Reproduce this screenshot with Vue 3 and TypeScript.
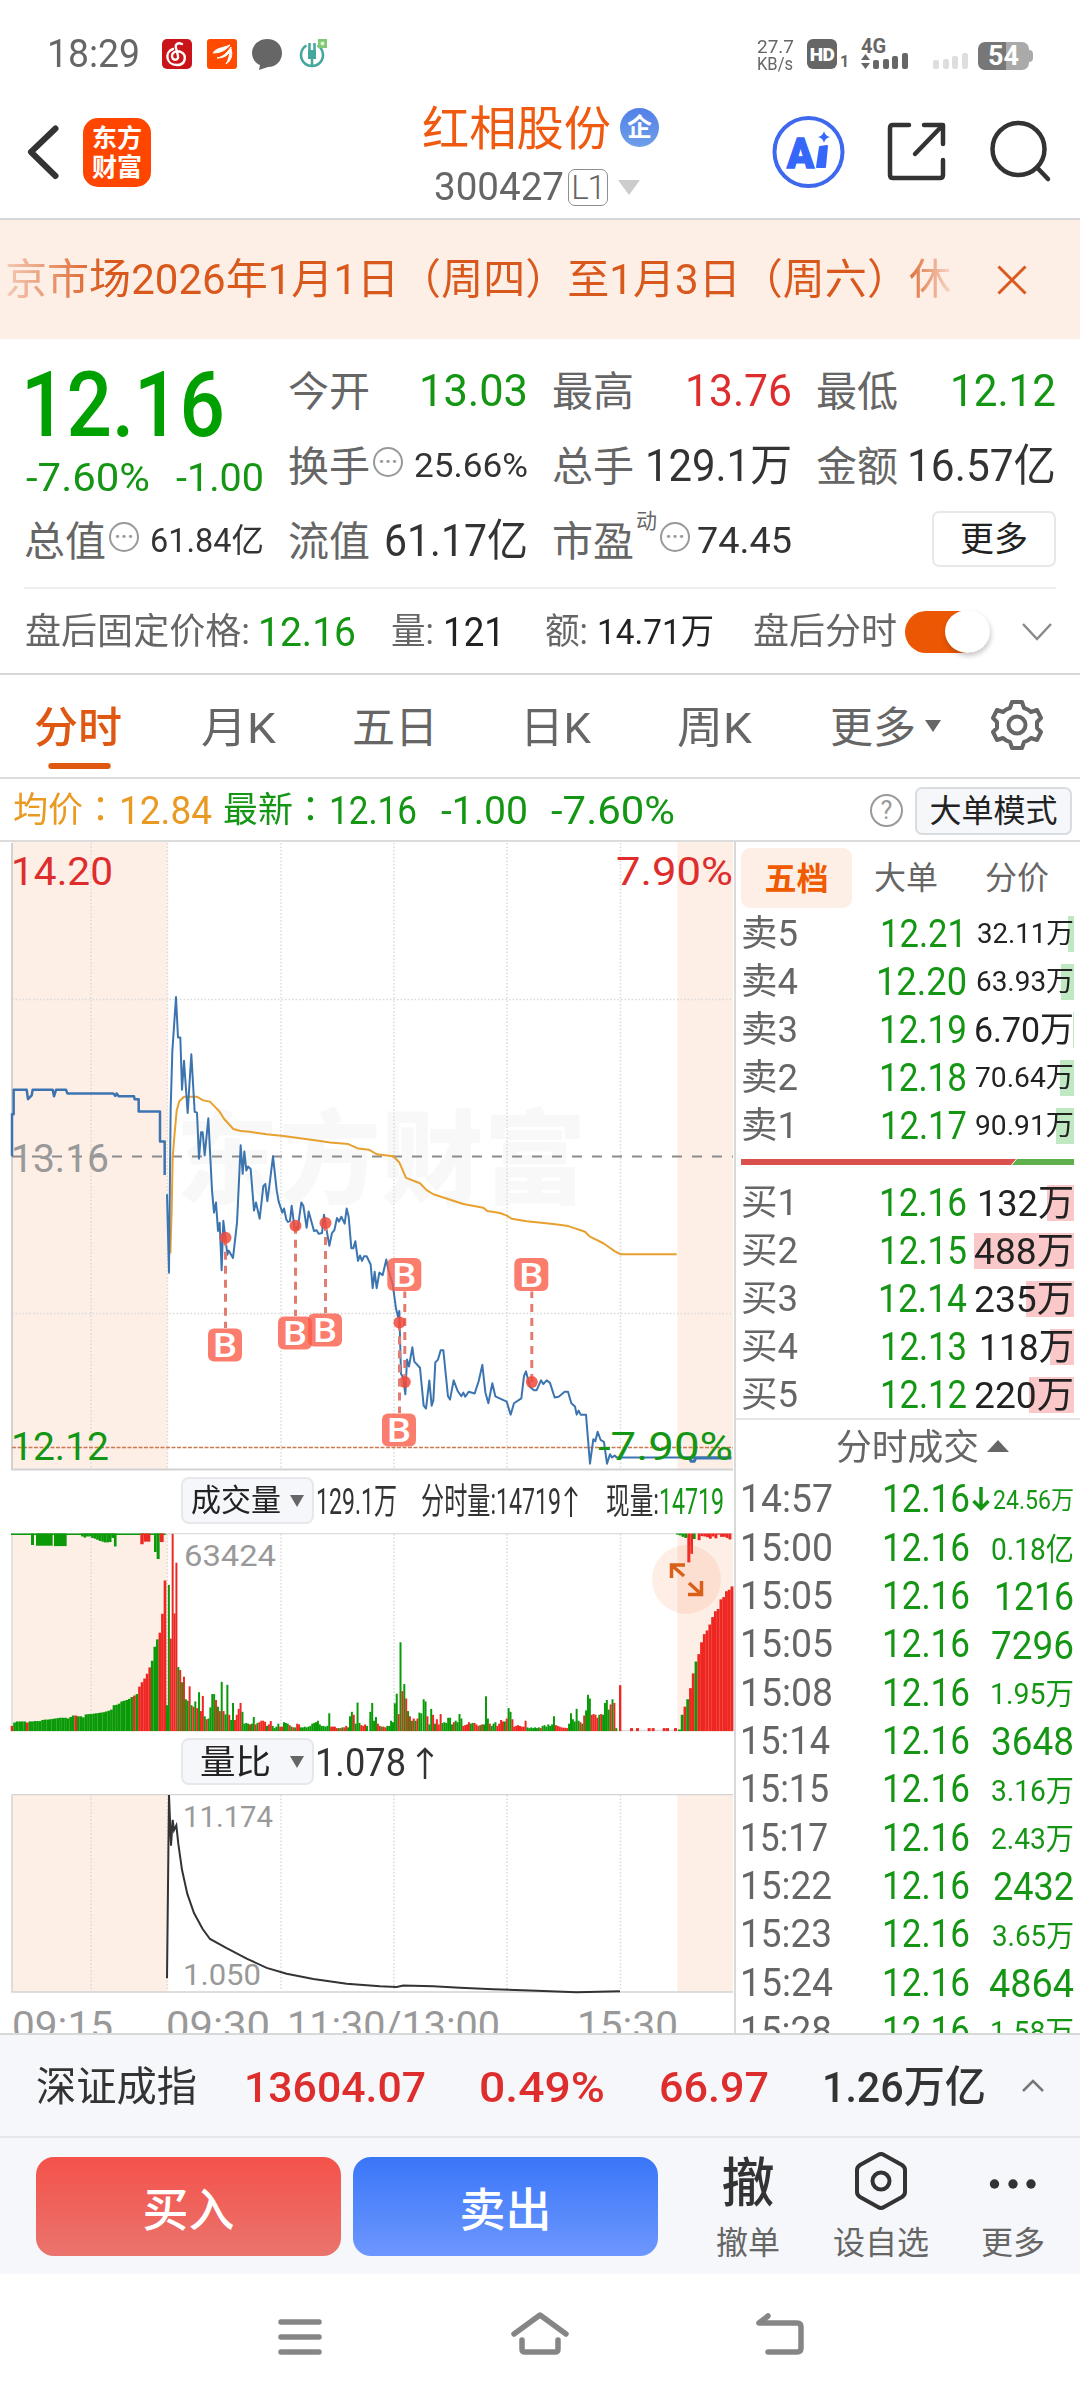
<script setup lang="ts">
import type { Directive } from 'vue'

// Squeezes or stretches a line of text to the given width in px.
const vFit: Directive<HTMLElement, number> = {
  mounted(el, { value }) {
    const natural = el.getBoundingClientRect().width
    if (!natural) return
    el.style.transformOrigin = '0 50%'
    el.style.transform = `scaleX(${value / natural})`
    el.style.marginRight = `${value - natural}px`
  },
}

interface Level { name: string; price: string; vol: string; bar: number; size: number; pw: number; vw: number }
const asks: Level[] = [
  { name: '卖5', price: '12.21', vol: '32.11万', bar: 6, size: 28, pw: 87, vw: 97 },
  { name: '卖4', price: '12.20', vol: '63.93万', bar: 13, size: 28, pw: 91, vw: 98 },
  { name: '卖3', price: '12.19', vol: '6.70万', bar: 1, size: 35, pw: 88, vw: 100 },
  { name: '卖2', price: '12.18', vol: '70.64万', bar: 14, size: 28, pw: 88, vw: 99 },
  { name: '卖1', price: '12.17', vol: '90.91万', bar: 18, size: 28, pw: 87, vw: 99 },
]
const bids: Level[] = [
  { name: '买1', price: '12.16', vol: '132万', bar: 27, size: 37, pw: 88, vw: 97 },
  { name: '买2', price: '12.15', vol: '488万', bar: 100, size: 37, pw: 88, vw: 100 },
  { name: '买3', price: '12.14', vol: '235万', bar: 48, size: 37, pw: 89, vw: 100 },
  { name: '买4', price: '12.13', vol: '118万', bar: 24, size: 37, pw: 87, vw: 95 },
  { name: '买5', price: '12.12', vol: '220万', bar: 45, size: 37, pw: 87, vw: 100 },
]

interface Trade { time: string; vol: string; size: number; vw: number; down?: boolean; tw: number }
const trades: Trade[] = [
  { time: '14:57', vol: '24.56万', size: 25, vw: 81, down: true, tw: 93 },
  { time: '15:00', vol: '0.18亿', size: 31, vw: 83, tw: 93 },
  { time: '15:05', vol: '1216', size: 38, vw: 80, tw: 93 },
  { time: '15:05', vol: '7296', size: 38, vw: 83, tw: 93 },
  { time: '15:08', vol: '1.95万', size: 30, vw: 84, tw: 93 },
  { time: '15:14', vol: '3648', size: 38, vw: 83, tw: 90 },
  { time: '15:15', vol: '3.16万', size: 30, vw: 83, tw: 89 },
  { time: '15:17', vol: '2.43万', size: 30, vw: 83, tw: 88 },
  { time: '15:22', vol: '2432', size: 38, vw: 81, tw: 92 },
  { time: '15:23', vol: '3.65万', size: 30, vw: 82, tw: 92 },
  { time: '15:24', vol: '4864', size: 38, vw: 85, tw: 93 },
  { time: '15:28', vol: '1.58万', size: 30, vw: 84, tw: 92 },
]

const preLine = '36,797 36,694 41,694 41,634 80,634 84,657 95,648 98,634 158,634 162,650 168,634 198,634 202,643 340,643 346,649 350,643 356,650 402,650 404,657 416,657 416,687 480,687 480,761 494,761 494,843'
const priceLine = '501,890 507,1082 512,680 517,540 528,407 534,506 541,506 546,634 552,563 563,691 574,547 584,688 591,690 597,803 603,738 608,738 614,795 625,704 636,880 642,935 648,910 654,980 659,960 665,1076 670,955 682,1038 686,1028 699,1046 711,960 722,770 728,840 733,785 739,832 744,822 752,828 762,930 768,910 779,950 790,870 796,865 802,907 808,870 819,797 830,880 836,908 847,935 852,925 859,952 864,958 870,955 875,918 884,975 893,975 904,910 910,918 920,972 926,932 942,980 950,978 956,987 966,985 972,940 988,1016 996,985 1003,978 1011,948 1017,957 1024,945 1034,962 1040,925 1046,945 1054,1022 1060,1022 1066,1005 1074,1053 1080,1040 1086,1053 1092,1042 1100,1042 1112,1062 1118,1120 1124,1080 1130,1120 1138,1082 1148,1088 1159,1050 1165,1075 1178,1110 1188,1170 1194,1190 1198,1176 1203,1330 1210,1340 1216,1380 1221,1295 1227,1312 1237,1265 1243,1300 1260,1315 1271,1408 1278,1415 1288,1346 1295,1408 1300,1395 1306,1302 1314,1295 1322,1272 1330,1272 1344,1385 1350,1393 1361,1346 1373,1372 1384,1385 1390,1376 1396,1386 1406,1374 1424,1378 1436,1348 1447,1308 1456,1375 1465,1402 1477,1353 1486,1385 1520,1398 1532,1430 1542,1402 1564,1390 1572,1335 1578,1324 1590,1362 1602,1370 1610,1370 1623,1346 1630,1355 1640,1346 1650,1352 1664,1388 1676,1386 1694,1374 1704,1374 1714,1402 1725,1410 1730,1430 1736,1420 1742,1430 1758,1430 1770,1550 1780,1490 1786,1495 1793,1472 1802,1492 1812,1497 1821,1550 1830,1527 1836,1535 1844,1530 1850,1535 2194,1535'
const avgLine = '511,1035 515,930 518,800 524,740 530,685 538,662 552,651 590,651 610,660 630,663 658,687 672,705 700,730 722,735 750,737 800,743 850,747 950,758 990,763 1045,767 1075,778 1108,781 1130,792 1180,797 1198,812 1218,850 1260,863 1280,880 1300,890 1390,914 1450,923 1462,931 1500,936 1522,943 1535,950 1580,956 1660,963 1705,968 1755,982 1770,994 1810,1010 1845,1030 1862,1037 2030,1037'
const ratioLine = '501,1398 507,903 513,1040 518,970 522,998 529,985 535,1035 546,1105 562,1170 582,1222 608,1265 630,1292 680,1317 740,1345 800,1370 860,1386 940,1400 1040,1413 1140,1420 1190,1422 1210,1418 1300,1420 1380,1424 1480,1428 1610,1432 1730,1436 1860,1433'

const marks = [
  { x: 225, dot: 1236.7, box: 1344 },
  { x: 295, dot: 1224.7, box: 1332 },
  { x: 325, dot: 1222, box: 1329 },
  { x: 404.3, dot: 1381, box: 1273.5 },
  { x: 399, dot: 1321.5, box: 1429 },
  { x: 531.3, dot: 1381, box: 1273.5 },
]

interface Bar { x: number; h: number; w: number; up: boolean }
function bars(start: number, step: number, src: string): Bar[] {
  return src.split(' ').map((t, i) => ({ x: start + i * step, h: parseInt(t), w: step + 0.3, up: t.endsWith('r') }))
}
const volume: Bar[] = [
  ...bars(32, 7.65, '14r 23 26 26 26 26 23r 26 26 27 27 27 30 31 31 32 33 34 35 36 36 36 34 38 42 42r 40 40 37 45 46 46 47 48 49 50 51 53 55 58 70 71 74 80 82 84 87 92 96r 100 120r 132r 142r 155r 172r 190 228 248 266r 317r 407r'),
  ...bars(498, 5.66, '70 395 250r 533r 318r 455r 173 165r 132 147r 86 82 121r 70 66r 80 62r 105 54r 95r 40 32r 34 64 100 100 84r 66 54r 133 54r 45 125 44r 30 76 30r 44r 60r 76r 52 20 22 20 18r 20 38 18r 22 24r 28r 28r 25r'),
  ...bars(798, 5.66, '14 18r 27r 14 8 12 20 12r 12r 24 22 20 16r 12 10r 10 20r 18r 10 10 12 10 12 14 20 22 24 28 18 14 14 12 14 48 12r 12r 12r 8r 8 8r 10 10r 14r 10 40 52 44r 20 77 22 16r 14r 18r 14'),
  ...bars(1108, 5.66, '52 76 28 38 20r 14r 12 12r 10r 14 14 28 24 75 101 46r 240 108r 127 88r 54 40r 28 34r 28 34r 50 48'),
  ...bars(1268, 5.66, '86 80 40r 18 60 44r 20 32r 18r 46r 22 24 22 36 36 18 24r 28 24 46 34 14r 16r 18r 24r 20 22 22r 18r 14r 16 18r 18'),
  ...bars(1455, 5.66, '94 34 20r 14 20 24 14r 20r 30r 26r 26 34r 62 52 32r 12r 14r 16r 14r 12r 12r 28r 10 8 10 8 10 8 10 8r'),
  ...bars(1625, 5.66, '14 16 12 18 14 18 40 16r 14r 12r 10r 9r 9r 8r 20'),
  ...bars(1710, 5.66, '48 32 26 60 28 24r 20 42r 56 98 88 44r 46r 44r 36r 44 46r 44 76 84 58 72r 86 76r 8'),
  { x: 1857, h: 124, w: 7, up: true },
  ...bars(2034, 8.3, '4 44 66r 86 116r 156r 188 208r 240r 262r 272r 288r 308r 324r 330r 356r 362r 378r 382r 391r'),
  ...[1890, 1908, 1943, 1955, 1988, 1998, 2022].map(x => ({ x, h: 8, w: 9, up: true })),
]
const hanging: Bar[] = [
  { x: 33, h: 4, w: 464, up: false },
  { x: 93, h: 31, w: 9, up: false },
  { x: 108, h: 33, w: 50, up: false },
  { x: 162, h: 34, w: 38, up: false },
  ...bars(243, 7.6, '8 11 8 8 12 14 17 20 22 24 24 23 12 35'),
  { x: 421, h: 29, w: 10, up: true },
  { x: 431, h: 22, w: 20, up: true },
  { x: 462, h: 50, w: 8, up: false },
  { x: 470, h: 69, w: 9, up: false },
  { x: 479, h: 23, w: 12, up: true },
  ...bars(2028, 8.3, '3 5 9 12'),
  { x: 2062, h: 78, w: 9, up: true },
  { x: 2071, h: 55, w: 8, up: true },
  { x: 2079, h: 15, w: 8, up: false },
  ...bars(2093, 8.4, '18r 7r 8r 10r 14r 8r 13r 3r 9r 9r 12r 16r'),
]
const fill = (b: Bar) => (b.up ? '#ee2722' : '#0a9a08')
const grid = [91, 167.5, 281, 394, 507, 620.5]
</script>

<template>
  <div class="screen">
    <header class="status">
      <span v-fit="93" class="clock">18:29</span>
      <svg class="s-icons" width="170" height="32" viewBox="160 38 170 32">
        <rect x="162" y="39" width="30" height="30" rx="5" fill="#c9151a" />
        <path d="M182 44c-5-2-7 1-6 4l2 8c1 5-6 5-6 0 0-4 5-6 9-4 6 3 5 13-4 13-11 0-13-13-4-16" fill="none" stroke="#fff" stroke-width="2.4" stroke-linecap="round" />
        <rect x="207" y="39" width="30" height="30" rx="3" fill="#ff4a00" />
        <path d="M213 53c3-5 10-5 17-8-3 4-8 8-17 8zM217 58c6-1 10-5 14-11 0 6-5 11-14 11zM226 64c3-4 3-9 5-15 2 6 0 12-5 15z" fill="#fff" stroke="#fff" stroke-width="1" />
        <path d="M267 39c9 0 15 6 15 14s-6 14-14 14l-9 3 1-5c-5-2-8-7-8-12 0-8 7-14 15-14z" fill="#666" />
        <path d="M306.500 45.500a11 11 0 1 0 11 0" fill="none" stroke="#45a79c" stroke-width="2.500" />
        <path d="M309.500 43v10M314.500 43v10M312 52v15" fill="none" stroke="#45a79c" stroke-width="2.500" /><rect x="308" y="50" width="8" height="9" fill="#45a79c" />
        <rect x="318" y="39" width="9" height="9" fill="#7fc978" /><circle cx="322.500" cy="43.500" r="2" fill="#dff3cf" />
      </svg>
      <div class="speed"><span v-fit="37">27.7</span><span v-fit="36">KB/s</span></div>
      <span class="hd">HD</span><span class="hd-sub">1</span>
      <div class="sim">
        <b>4G</b>
        <svg width="48" height="17" viewBox="861 53 48 17" fill="#666"><path d="M861 60l4.500-6 4.500 6zM861 63h9l-4.500 6z" /><rect x="873" y="60" width="6" height="9" rx="2" /><rect x="883" y="59" width="6" height="10" rx="2" /><rect x="892" y="56" width="6" height="13" rx="2" /><rect x="902" y="53" width="6" height="16" rx="2" /></svg>
      </div>
      <svg class="nosim" width="36" height="17" viewBox="933 53 36 17" fill="#dedede"><rect x="933" y="60" width="6" height="9" rx="2" /><rect x="943" y="59" width="6" height="10" rx="2" /><rect x="952" y="56" width="6" height="13" rx="2" /><rect x="962" y="53" width="6" height="16" rx="2" /></svg>
      <div class="battery"><span>54</span></div><i class="nub"></i>
    </header>

    <div class="head">
      <svg class="back" width="40" height="60" viewBox="22 122 40 60"><path d="M55.500 128.500L31 152l24.500 24" fill="none" stroke="#333" stroke-width="6" stroke-linecap="round" stroke-linejoin="round" /></svg>
      <div class="logo"><span>东方</span><span>财富</span></div>
      <div class="title">
        <div class="name"><span v-fit="189">红相股份</span><i class="corp">企</i></div>
        <div class="code"><span v-fit="130">300427</span><i class="l1">L1</i><i class="caret"></i></div>
      </div>
      <svg class="tools" width="290" height="76" viewBox="770 114 290 76" fill="none">
        <circle cx="808.500" cy="152" r="34" stroke="#3e68ee" stroke-width="4" />
        <text x="787" y="168" class="ai" textLength="27" lengthAdjust="spacingAndGlyphs">A</text>
        <path d="M820 147l7-1-2 21h-8z" fill="#3567fa" stroke="#3567fa" stroke-width="2" stroke-linejoin="round" />
        <path d="M824 131q1 5 6 6-5 1-6 6-1-5-6-6 5-1 6-6z" fill="#3567fa" />
        <g stroke="#333" stroke-width="4.500" stroke-linecap="round" stroke-linejoin="round"><path d="M909 125h-16q-3 0-3 3v47q0 3 3 3h47q3 0 3-3v-15M924 125h19v19M942 126l-27 28" /><circle cx="1018.500" cy="149" r="26" /><path d="M1037 167.500l11 11.500" /></g>
      </svg>
    </div>

    <div class="notice">
      <div class="marquee"><span v-fit="946">京市场2026年1月1日（周四）至1月3日（周六）休</span></div>
      <svg width="32" height="32" viewBox="0 0 32 32"><path d="M2.500 2.500l27 27M29.500 2.500l-27 27" stroke="#d9591c" stroke-width="3" /></svg>
    </div>

    <section class="quote">
      <div class="now">
        <span v-fit="204" class="big">12.16</span>
        <div class="chg"><span v-fit="124">-7.60%</span><span v-fit="88">-1.00</span></div>
      </div>
      <div class="cell"><label>今开</label><span v-fit="109" class="v g">13.03</span></div>
      <div class="cell"><label>最高</label><span v-fit="107" class="v r">13.76</span></div>
      <div class="cell"><label>最低</label><span v-fit="106" class="v g">12.12</span></div>
      <div class="cell"><label>换手</label><i class="info">•••</i><span v-fit="114" class="v s">25.66%</span></div>
      <div class="cell"><label>总手</label><span v-fit="147" class="v">129.1万</span></div>
      <div class="cell"><label>金额</label><span v-fit="149" class="v">16.57亿</span></div>
      <div class="cell"><label>总值</label><i class="info">•••</i><span v-fit="114" class="v s">61.84亿</span></div>
      <div class="cell"><label>流值</label><span v-fit="144" class="v">61.17亿</span></div>
      <div class="cell"><label>市盈</label><sup>动</sup><i class="info pe">•••</i><span v-fit="95" class="v m">74.45</span></div>
      <div class="cell end"><button class="more">更多</button></div>
    </section>
    <section class="after">
      <span v-fit="225" class="lb">盘后固定价格:</span><span v-fit="98" class="num g a1">12.16</span>
      <span v-fit="43" class="lb a2">量:</span><span v-fit="62" class="num a3">121</span>
      <span v-fit="43" class="lb a4">额:</span><span v-fit="117" class="num sm a5">14.71万</span>
      <span v-fit="144" class="lb a6">盘后分时</span>
      <i class="toggle"></i>
      <svg width="32" height="20" viewBox="0 0 32 20"><path d="M2 2l14 15L30 2" fill="none" stroke="#8a8a8a" stroke-width="2.500" /></svg>
    </section>

    <nav class="tabs">
      <span v-fit="88" class="on">分时</span><span v-fit="75">月K</span><span v-fit="86">五日</span><span v-fit="71">日K</span><span v-fit="75">周K</span><span v-fit="86">更多</span>
      <i class="tri"></i>
      <svg class="gear" width="54" height="54" viewBox="-27 -27 54 54" fill="none" stroke="#666" stroke-width="4" stroke-linejoin="round">
        <path d="M-5-23H5L7-17Q11-16 14-13L20-15 24-7 20-3V3L24 7 20 15 14 13Q11 16 7 17L5 23H-5L-7 17Q-11 16-14 13L-20 15-24 7-20 3V-3L-24-7-20-15-14-13Q-11-16-7-17Z" /><circle r="8.500" />
      </svg>
    </nav>

    <div class="avg">
      <span v-fit="105" class="zh o">均价：</span><span v-fit="93" class="n o">12.84</span>
      <span v-fit="105" class="zh g b1">最新：</span><span v-fit="88" class="n g">12.16</span><span v-fit="87" class="n g b2">-1.00</span><span v-fit="124" class="n g b3">-7.60%</span>
      <i class="help">?</i><button class="mode">大单模式</button>
    </div>

    <main class="board">
      <div class="charts">
        <svg class="plot" width="735" height="629" viewBox="0 841 735 629">
          <rect x="12" y="841" width="155.500" height="627" fill="#fdeee6" /><rect x="677.500" y="841" width="55.500" height="627" fill="#fdeee6" />
          <text x="176" y="1195" class="mark" textLength="410">东方财富</text>
          <g class="dots"><line v-for="x in grid" :key="x" :x1="x" :x2="x" y1="842" y2="1468" /><path d="M12 998.500H733M12 1312.500H733" /></g>
          <path d="M12 842V1468.500H733" fill="none" stroke="#d2d2d2" stroke-width="2" />
          <path d="M12 1155.500H733" stroke="#8b8b8b" stroke-width="2" stroke-dasharray="10 10" />
          <path d="M12 1446.500H733" stroke="#cc7a52" stroke-width="1.500" stroke-dasharray="4 1.500" />
          <text x="11" y="1171" textLength="98" lengthAdjust="spacingAndGlyphs" fill="#999">13.16</text>
          <g transform="translate(0 830) scale(.33333 .40816)" fill="none" stroke-linejoin="round">
            <polyline :points="avgLine" stroke="#e8a02f" stroke-width="2" vector-effect="non-scaling-stroke" />
            <polyline :points="preLine" stroke="#3c74b0" stroke-width="2.500" vector-effect="non-scaling-stroke" />
            <polyline :points="priceLine" stroke="#3c74b0" stroke-width="2" vector-effect="non-scaling-stroke" />
            <path d="M2055 1536h14l4 8h10l4-8h107" stroke="#3c74b0" stroke-width="3" vector-effect="non-scaling-stroke" />
          </g>
          <text x="11" y="884" textLength="102" lengthAdjust="spacingAndGlyphs" fill="#dd2d2d">14.20</text>
          <text x="616" y="884" textLength="117" lengthAdjust="spacingAndGlyphs" fill="#dd2d2d">7.90%</text>
          <text x="11" y="1459" textLength="98" lengthAdjust="spacingAndGlyphs" fill="#149614">12.12</text>
          <text x="598" y="1459" textLength="135" lengthAdjust="spacingAndGlyphs" fill="#149614">-7.90%</text>
          <g v-for="m in marks" :key="m.x">
            <line :x1="m.x + 0.500" :x2="m.x + 0.500" :y1="m.dot" :y2="m.box + (m.box > m.dot ? -17 : 17)" stroke="#e27c70" stroke-width="3" stroke-dasharray="8 6" />
            <ellipse :cx="m.x + 0.500" :cy="m.dot" rx="6" ry="6" fill="#f04a3c" fill-opacity=".85" />
            <rect :x="m.x - 17" :y="m.box - 16.500" width="34" height="33" rx="6" fill="#fa5c48" fill-opacity=".8" />
            <text :x="m.x - 12" :y="m.box + 12" class="b" textLength="24" lengthAdjust="spacingAndGlyphs">B</text>
          </g>
        </svg>

        <div class="ind">
          <button><span v-fit="90" class="i1">成交量</span><i class="tri sm"></i></button>
          <span v-fit="81" class="c1">129.1万</span><span v-fit="140" class="c2">分时量:14719</span><svg width="14" height="32" viewBox="0 0 14 32"><path d="M7 31V2M1 10L7 2l6 8" fill="none" stroke="#333" stroke-width="2" /></svg>
          <span v-fit="53" class="c3">现量:</span><span v-fit="65" class="g">14719</span>
        </div>
        <svg class="plot" width="735" height="199" viewBox="0 1532 735 199">
          <rect x="12" y="1532" width="155.500" height="198" fill="#fdeee6" /><rect x="677.500" y="1532" width="55.500" height="198" fill="#fdeee6" />
          <g class="dots"><line v-for="x in grid" :key="x" :x1="x" :x2="x" y1="1533" y2="1729" /></g>
          <path d="M733 1532.500H12V1729.500H733" fill="none" stroke="#dcdcdc" stroke-width="1.500" />
          <g transform="translate(0 1460) scale(.33333 .36996)">
            <rect v-for="(b, i) in volume" :key="i" :x="b.x" :y="730 - b.h" :width="b.w" :height="b.h" :fill="fill(b)" />
            <rect v-for="(b, i) in hanging" :key="'t' + i" :x="b.x" y="196" :width="b.w" :height="b.h" :fill="fill(b)" />
          </g>
          <text x="184" y="1565" textLength="92" lengthAdjust="spacingAndGlyphs" class="sub">63424</text>
          <circle cx="686.500" cy="1578.500" r="34.500" fill="#f57a3c" fill-opacity=".13" />
          <path d="M671.500 1577v-13H685M672 1564.500l12 10.500M701.500 1580v13.500H688M701 1593l-12-11" fill="none" stroke="#d96018" stroke-width="3.500" />
        </svg>

        <div class="ind">
          <button><span v-fit="71" class="i2">量比</span><i class="tri sm"></i></button>
          <span v-fit="91" class="c4">1.078</span><svg class="up" width="18" height="32" viewBox="0 0 18 32"><path d="M9 32V2M1.500 9.500L9 2l7.500 7.500" fill="none" stroke="#333" stroke-width="2.500" /></svg>
        </div>
        <svg class="plot" width="735" height="239" viewBox="0 1793 735 239">
          <rect x="12" y="1793" width="155.500" height="198" fill="#fdeee6" /><rect x="677.500" y="1793" width="55.500" height="198" fill="#fdeee6" />
          <g class="dots"><line v-for="x in grid" :key="x" :x1="x" :x2="x" y1="1794" y2="1990" /></g>
          <path d="M12 1793.500H733M12 1793.500V1991H733" fill="none" stroke="#d4d4d4" stroke-width="1.500" />
          <text x="183" y="1826" textLength="90" lengthAdjust="spacingAndGlyphs" class="sub">11.174</text>
          <text x="183" y="1984" textLength="78" lengthAdjust="spacingAndGlyphs" class="sub">1.050</text>
          <polyline :points="ratioLine" transform="translate(0 1460) scale(.33333 .36996)" fill="none" stroke="#333" stroke-width="2" vector-effect="non-scaling-stroke" />
          <g fill="#999"><text x="12" y="2038" textLength="101" lengthAdjust="spacingAndGlyphs">09:15</text><text x="166" y="2038" textLength="104" lengthAdjust="spacingAndGlyphs">09:30</text><text x="287" y="2038" textLength="213" lengthAdjust="spacingAndGlyphs">11:30/13:00</text><text x="577" y="2038" textLength="101" lengthAdjust="spacingAndGlyphs">15:30</text></g>
        </svg>
      </div>

      <aside class="side">
        <div class="stabs"><b>五档</b><span>大单</span><span>分价</span></div>
        <div v-for="l in asks" :key="l.name" class="lvl">
          <i class="bar ask" :style="{ width: l.bar + 'px' }"></i>
          <span v-fit="57" class="ln">{{ l.name }}</span><span v-fit="l.pw" class="lp">{{ l.price }}</span><div class="lv"><span v-fit="l.vw" :style="{ fontSize: l.size + 'px' }">{{ l.vol }}</span></div>
        </div>
        <svg class="ratio" width="333" height="6" viewBox="0 0 333 6"><path d="M0 0h275l-5 6H0z" fill="#d9504c" /><path d="M276 0h57v6h-62z" fill="#5fb04c" /></svg>
        <div v-for="l in bids" :key="l.name" class="lvl">
          <i class="bar bid" :style="{ width: l.bar + 'px' }"></i>
          <span v-fit="57" class="ln">{{ l.name }}</span><span v-fit="l.pw" class="lp">{{ l.price }}</span><div class="lv"><span v-fit="l.vw" :style="{ fontSize: l.size + 'px' }">{{ l.vol }}</span></div>
        </div>
        <div class="thead"><span v-fit="143">分时成交</span><i class="tri-up"></i></div>
        <div v-for="(t, i) in trades" :key="i" class="trade">
          <div class="tc"><span v-fit="t.tw" class="tt">{{ t.time }}</span></div><span v-fit="88" class="tp">12.16</span>
          <svg v-if="t.down" width="18" height="24" viewBox="0 0 18 24"><path d="M9 0v22M1.500 14L9 21.500l7.500-7.500" fill="none" stroke="#149614" stroke-width="3.500" /></svg>
          <div class="tv"><span v-fit="t.vw" :style="{ fontSize: t.size + 'px' }">{{ t.vol }}</span></div>
        </div>
      </aside>
    </main>

    <div class="index">
      <span v-fit="161" class="ix0">深证成指</span><span v-fit="182" class="r ix1">13604.07</span><span v-fit="126" class="r ix2">0.49%</span><span v-fit="110" class="r ix3">66.97</span><span v-fit="164" class="ix4">1.26万亿</span>
      <svg width="24" height="14" viewBox="0 0 24 14"><path d="M2 12L12 2l10 10" fill="none" stroke="#777" stroke-width="2.500" /></svg>
    </div>
    <div class="actions">
      <button class="buy">买入</button><button class="sell">卖出</button>
      <div class="act a-cancel"><span class="glyph">撤</span><span>撤单</span></div>
      <div class="act a-fav"><svg width="56" height="62" viewBox="-28 -31 56 62" fill="none" stroke="#333" stroke-width="4" stroke-linejoin="round"><path d="M-3-26Q0-28 3-26L21-16Q24-14 24-11V11Q24 14 21 16L3 26Q0 28-3 26L-21 16Q-24 14-24 11V-11Q-24-14-21-16Z" /><circle r="8.500" /></svg><span>设自选</span></div>
      <div class="act a-more"><svg width="48" height="62" viewBox="0 0 48 62" fill="#333"><circle cx="5.500" cy="34" r="4.700" /><circle cx="24" cy="34" r="4.700" /><circle cx="42" cy="34" r="4.700" /></svg><span>更多</span></div>
    </div>
    <footer class="navbar">
      <svg width="560" height="60" viewBox="260 2306 560 60" fill="none" stroke="#868686" stroke-width="5.500" stroke-linecap="round" stroke-linejoin="round"><path d="M281 2322h38M281 2337h38M281 2352h38M514 2334l26-19 26 19M522 2340v9q0 3 3 3h30q3 0 3-3v-9M768 2316l-9 7h38q4 0 4 4v21q0 4-4 4h-29" /></svg>
    </footer>
  </div>
</template>

<style>
body { background: #fff; }
</style>
<style scoped>
.screen { width: 1080px; height: 2400px; overflow: hidden; display: flex; flex-direction: column; background: #fff; font-family: Roboto, "Noto Sans CJK SC", sans-serif; color: #333; line-height: 1; }
.screen * { box-sizing: border-box; }
i { font-style: normal; }
span { display: inline-block; white-space: nowrap; flex: none; }
button { font: inherit; line-height: 1; padding: 0; border: 0; background: none; color: #222; flex: none; }
svg { flex: none; display: block; }
.g { color: #149614 !important; }
.r { color: #dd2d2d !important; }
.o { color: #e99a22; }

.status { height: 92px; flex: none; display: flex; padding: 38px 0 0 47px; color: #666; }
.clock { font-size: 39px; margin-top: -3px; }
.s-icons { margin-left: 20px; }
.speed { margin-left: 427px; font-size: 18px; display: flex; flex-direction: column; align-items: flex-start; width: 37px; }
.speed span { height: 17px; line-height: 17px; }
.hd { display: block; flex: none; margin: 1px 0 0 13px; width: 30px; height: 30px; border-radius: 6px; background: #666; color: #fff; font-size: 19px; font-weight: 900; line-height: 31px; text-align: center; letter-spacing: -.5px; }
.hd-sub { display: block; flex: none; font-size: 16px; font-weight: 700; line-height: 16px; width: 9px; margin: 16px 0 0 3px; }
.sim { margin-left: 12px; width: 48px; height: 32px; }
.sim b { display: block; font-size: 20px; height: 15px; line-height: 17px; }
.nosim { margin: 15px 0 0 24px; }
.battery { margin: 4px 0 0 9px; width: 51px; height: 28px; border-radius: 7px; background: linear-gradient(90deg, #777 0 28px, #aaa 28px); color: #fff; font-weight: 700; font-size: 27px; line-height: 29px; text-align: center; }
.nub { width: 4px; height: 12px; margin-top: 12px; background: #aaa; border-radius: 0 4px 4px 0; }

.head { height: 128px; flex: none; display: flex; border-bottom: 2px solid #d4d6d9; }
.back { margin: 30px 0 0 22px; }
.logo { margin: 26px 0 0 21px; width: 68px; height: 69px; border-radius: 15px; background: #ff4600; color: #fff; font-weight: 700; font-size: 25px; display: flex; flex-direction: column; align-items: center; padding-top: 8px; gap: 3px; }
.logo span { height: 26px; line-height: 26px; }
.title { width: 280px; margin: 12px 0 0 271px; height: 108px; }
.name { display: flex; align-items: center; height: 48px; font-size: 47px; color: #f05a10; }
.corp { width: 39px; height: 39px; border-radius: 50%; background: linear-gradient(#5280e6, #6f9eeb); color: #fff; font-size: 25px; font-weight: 700; text-align: center; line-height: 40px; margin-left: 9px; margin-top: -1px; }
.code { display: flex; align-items: center; height: 38px; margin: 16px 0 0 12px; font-size: 39px; color: #666; }
.l1 { width: 40px; height: 37px; margin-left: 4px; border: 1.500px solid #8e8e8e; border-radius: 7px; font-size: 33px; line-height: 35px; text-align: center; letter-spacing: -1px; font-weight: 300; }
.caret { margin-left: 10px; border: 11px solid transparent; border-top: 15px solid #ccc; border-bottom: 0; }
.tools { margin: 22px 0 0 68px; }
.ai { font: 900 43px Roboto, sans-serif; fill: #3567fa; stroke: #3567fa; stroke-width: 1.500px; }

.notice { height: 119px; flex: none; background: #fdeee6; display: flex; align-items: center; color: #d9591c; font-size: 42px; }
.marquee { width: 996px; padding-left: 5px; overflow: hidden; height: 60px; line-height: 60px; white-space: nowrap; -webkit-mask-image: linear-gradient(90deg, rgba(0, 0, 0, .2) 0, #000 105px, #000 900px, transparent 960px); mask-image: linear-gradient(90deg, rgba(0, 0, 0, .2) 0, #000 105px, #000 900px, transparent 960px); }

.quote { height: 250px; flex: none; margin: 0 24px; padding-top: 14px; border-bottom: 2px solid #efefef; display: grid; grid-template-columns: repeat(4, 240px); grid-auto-rows: 75px; column-gap: 24px; }
.now { grid-row: span 2; color: #149614; }
.big { font-size: 90px; font-weight: 500; color: #00a000; margin: 8px 0 0 -3px; display: block; height: 90px; width: max-content; }
.chg { display: flex; justify-content: space-between; font-size: 38px; margin: 8px 0 0 2px; width: 238px; }
.cell { display: flex; align-items: center; color: #333; }
.cell label { font-size: 41px; color: #666; height: 38px; line-height: 40px; flex: none; }
.cell .v { font-size: 44px; margin-left: auto; }
.cell .v.s { font-size: 33px; }
.cell .v.m { font-size: 37px; }
.info { width: 30px; height: 30px; border: 2.500px solid #999; border-radius: 50%; font-size: 11px; line-height: 25px; text-align: center; color: #999; margin: -7px 0 0 3px; flex: none; font-family: "DejaVu Sans", sans-serif; }
.cell sup { font-size: 21px; color: #666; align-self: flex-start; margin: 8px 0 0 2px; line-height: 1; }
.end { justify-content: flex-end; }
.more { width: 124px; height: 56px; border: 2px solid #e6e8ea; border-radius: 7px; font-size: 34px; margin-top: -4px; }

.after { height: 86px; flex: none; display: flex; align-items: center; padding: 2px 27px 0 25px; border-bottom: 2px solid #d8d8d8; color: #222; }
.lb { font-size: 36px; color: #666; }
.num { font-size: 41px; }
.num.sm { font-size: 35px; }
.a1 { margin-left: 8px; } .a2 { margin-left: 35px; } .a3 { margin-left: 9px; }
.a4 { margin-left: 40px; } .a5 { margin-left: 9px; } .a6 { margin-left: 39px; }
.toggle { position: relative; width: 82px; height: 42px; border-radius: 21px; background: #eb5703; margin: 0 34px 0 8px; flex: none; }
.toggle::after { content: ""; position: absolute; right: -3px; top: -1px; width: 45px; height: 43px; border-radius: 50%; background: #fff; box-shadow: 1px 3px 5px rgba(0, 0, 0, .22); }

.tabs { height: 104px; flex: none; display: flex; align-items: center; border-bottom: 2px solid #dcdcdc; font-size: 43px; color: #666; padding-left: 34px; }
.tabs span { padding-top: 5px; }
.tabs span:nth-child(2) { margin-left: 79px; } .tabs span:nth-child(3) { margin-left: 76px; } .tabs span:nth-child(4) { margin-left: 82px; } .tabs span:nth-child(5) { margin-left: 86px; } .tabs span:nth-child(6) { margin-left: 78px; }
.tabs .on { color: #de5812; font-weight: 500; position: relative; }
.tabs .on::after { content: ""; position: absolute; left: 14px; bottom: -19px; width: 61px; height: 6px; border-radius: 3px; background: #de5812; }
.tri { border: 8px solid transparent; border-top: 12px solid #666; border-bottom: 0; margin-left: 9px; }
.gear { margin-left: 49px; margin-top: -2px; }

.avg { height: 63px; flex: none; display: flex; align-items: center; padding: 2px 0 0 13px; border-bottom: 2px solid #dcdcdc; font-size: 35px; }
.avg .zh { font-family: Roboto, "Noto Sans CJK TC", sans-serif; }
.avg .n { font-size: 38px; margin-left: 1px; }
.b1 { margin-left: 11px; }
.avg .b2 { margin-left: 24px; } .avg .b3 { margin-left: 23px; }
.help { width: 33px; height: 33px; border: 2.500px solid #999; border-radius: 50%; color: #999; font-size: 25px; line-height: 29px; text-align: center; margin-left: auto; }
.mode { width: 157px; height: 48px; border: 2px solid #d9dde0; border-radius: 7px; background: #f6f7fa; font-size: 32px; margin: 0 8px 0 12px; }

.board { height: 1191px; flex: none; display: flex; overflow: hidden; }
.charts { width: 736px; flex: none; border-right: 2px solid #d9d9d9; }
.plot { overflow: hidden; }
.plot text { font-size: 39.500px; }
.plot .sub { font-size: 30px; fill: #999; }
.plot .mark { font-size: 102px; font-weight: 900; fill: #f8f8f8; }
.plot .b { font-size: 33px; font-weight: 500; fill: #fff; }
.dots { stroke: #dadada; stroke-width: 1.500; stroke-dasharray: 1.500 2; fill: none; }
.ind { height: 62px; display: flex; align-items: center; padding-left: 181px; font-size: 38px; }
.ind button { width: 133px; height: 47px; border: 2px solid #e6e8eb; border-radius: 8px; background: #f6f7fa; display: flex; align-items: center; justify-content: flex-end; padding-right: 8px; margin-bottom: 3px; }
.i1 { font-size: 31px; } .i2 { font-size: 34px; }
.tri.sm { border-width: 12px 7px 0; margin-left: 9px; }
.i2 + .tri.sm { margin-left: 19px; }
.c1 { margin-left: 2px; font-size: 36px; } .c2 { margin-left: 24px; font-size: 36px; } .ind svg { margin-left: 3px; } .c3 { margin-left: 28px; font-size: 36px; }
.c3 + span { font-size: 36px; }
.c4 { margin-left: 1px; } .ind .up { margin-left: 10px; }

.side { width: 344px; flex: none; }
.stabs { height: 68px; display: flex; align-items: center; padding: 6px 0 2px 5px; font-size: 32px; color: #666; }
.stabs b { width: 111px; height: 60px; background: #fdeee6; border-radius: 9px; color: #f05a00; text-align: center; line-height: 62px; }
.stabs span { margin-left: 22px; }
.stabs span:last-child { margin-left: 47px; }
.lvl { position: relative; height: 48px; display: flex; align-items: center; padding: 0 6px 0 5px; color: #222; }
.bar { position: absolute; right: 6px; top: 6px; height: 36px; }
.ask { background: #c0e8c2; } .bid { background: #fac8c8; }
.lvl > span, .lv { position: relative; }
.ln { font-size: 36px; color: #666; }
.lp { font-size: 39px; color: #149614; margin-left: auto; }
.lv { width: 107px; display: flex; justify-content: flex-end; flex: none; }
.ratio { margin: 9px 0 14px 5px; }
.thead { height: 58px; border-top: 2px solid #e6e6e6; display: flex; align-items: center; padding-left: 100px; font-size: 36px; color: #666; margin-bottom: -1px; margin-top: -1px; }
.tri-up { border: 11px solid transparent; border-bottom: 12px solid #666; border-top: 0; margin: -4px 0 0 8px; }
.trade { height: 48.350px; display: flex; align-items: center; padding: 0 6px 0 4px; color: #149614; }
.tc { width: 142px; flex: none; }
.tt { font-size: 38px; color: #666; display: block; width: max-content; }
.trade .tp { font-size: 38px; }
.trade svg { margin-left: 2px; }
.tv { margin-left: auto; padding-top: 3px; }
.tv span { float: right; }

.index { height: 105px; flex: none; background: #f6f7fa; border-top: 2px solid #d6d8da; border-bottom: 2px solid #e6e7e9; display: flex; align-items: center; padding: 4px 0 0 36px; font-size: 43px; font-weight: 500; }
.ix0 { font-size: 41px; font-weight: 400; }
.ix1 { margin-left: 47px; } .ix2 { margin-left: 53px; } .ix3 { margin-left: 54px; } .ix4 { margin-left: 53px; }
.index svg { margin: -4px 0 0 35px; }
.actions { height: 136px; flex: none; background: #f6f7fa; display: flex; padding: 19px 0 0 36px; }
.actions button { width: 305px; height: 99px; border-radius: 18px; color: #fff; font-size: 46px; font-weight: 500; padding-top: 6px; }
.buy { background: linear-gradient(#f4524a, #ea746e); margin-right: 12px; }
.sell { background: linear-gradient(#3a76f8, #6d97fe); }
.act { display: flex; flex-direction: column; align-items: center; font-size: 32px; color: #666; margin-top: -7px; }
.act > :first-child { height: 62px; }
.act > :last-child { margin-top: 15px; }
.glyph { font-size: 53px; font-weight: 500; color: #333; line-height: 69px; }
.a-cancel { margin-left: 58px; } .a-fav { margin-left: 53px; } .a-more { margin-left: 52px; }
.navbar { flex: 1; display: flex; justify-content: center; padding-top: 32px; }
</style>
